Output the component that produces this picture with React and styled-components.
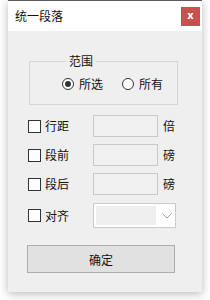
import styled, { createGlobalStyle } from 'styled-components';

const GlobalStyle = createGlobalStyle`
    html, body {
        margin: 0;
        padding: 0;
        background: #ffffff;
    }
    body {
        font-family: "Noto Sans CJK SC", "Noto Sans", sans-serif;
        font-size: 12px;
        color: #111;
    }
`;

const Page = styled.div`
    width: 210px;
    height: 300px;
    padding: 0 8px;
    box-sizing: border-box;
`;

const Window = styled.div`
    width: 194px;
    height: 292px;
    border-top: 1px solid #5c5c5c;
    box-sizing: border-box;
    display: flex;
    flex-direction: column;
    box-shadow: 0 2px 9px rgba(0, 0, 0, 0.28);
`;

const TitleBar = styled.div`
    height: 30px;
    flex: none;
    background: #ffffff;
    display: flex;
    align-items: center;
    justify-content: space-between;
    padding: 0 2px 0 7px;
`;

const Title = styled.span`
    font-size: 12px;
    line-height: 16px;
    color: #111;
`;

const CloseBtn = styled.div`
    width: 19px;
    height: 19px;
    background: #c9504f;
    color: #fff;
    font-family: "DejaVu Sans", sans-serif;
    font-weight: bold;
    font-size: 10px;
    line-height: 18px;
    text-align: center;
`;

const Body = styled.div`
    flex: 1;
    background: #efefef;
    padding: 22px 0 0 20px;
    display: flex;
    flex-direction: column;
`;

const GroupBox = styled.fieldset`
    margin: 0 0 0 1px;
    width: 149px;
    box-sizing: border-box;
    border: 1px solid #d6d6d6;
    padding: 7px 0 12px 32px;
    min-width: 0;
`;

const Legend = styled.legend`
    margin-left: 4px;
    padding: 0 3px;
    font-size: 12px;
    line-height: 16px;
`;

const RadioRow = styled.div`
    display: flex;
    align-items: center;
    height: 16px;
    gap: 19px;
`;

const RadioItem = styled.label`
    display: flex;
    align-items: center;
    gap: 5px;
    line-height: 16px;
`;

const RadioCircle = styled.span`
    width: 12px;
    height: 12px;
    border: 1px solid #333;
    border-radius: 50%;
    background: #fff;
    box-sizing: border-box;
    display: flex;
    align-items: center;
    justify-content: center;

    &::after {
        content: '';
        width: 6px;
        height: 6px;
        border-radius: 50%;
        background: ${({ checked }) => (checked ? '#333' : 'transparent')};
    }
`;

const Rows = styled.div`
    margin-top: 10px;
    display: flex;
    flex-direction: column;
    gap: 7px;
`;

const Row = styled.div`
    display: flex;
    align-items: center;
    height: ${({ tall }) => (tall ? '25px' : '22px')};
    margin-top: ${({ tall }) => (tall ? '1px' : '0')};
`;

const CheckLabel = styled.label`
    width: 65px;
    display: flex;
    align-items: center;
    gap: 4px;
    line-height: 16px;
`;

const CheckBox = styled.span`
    width: 13px;
    height: 13px;
    border: 1px solid #333;
    background: #fff;
    box-sizing: border-box;
`;

const TextBox = styled.div`
    width: 65px;
    height: 22px;
    box-sizing: border-box;
    border: 1px solid #c9c9c9;
    background: #f0f0f0;
`;

const Unit = styled.span`
    margin-left: 5px;
    line-height: 16px;
`;

const Select = styled.div`
    width: 83px;
    height: 25px;
    box-sizing: border-box;
    border: 1px solid #cacaca;
    background: #fff;
    display: flex;
    align-items: center;
    padding: 0 0 0 2px;
`;

const SelectField = styled.div`
    width: 60px;
    height: 19px;
    background: #efefef;
`;

const Chevron = styled.svg`
    margin-left: 6px;
`;

const OkButton = styled.button`
    margin: 17px 0 0 -1px;
    width: 148px;
    height: 28px;
    box-sizing: border-box;
    border: 1px solid #adadad;
    background: #e1e1e1;
    font-family: inherit;
    font-size: 12px;
    color: #111;
    padding: 0;
`;

const rows = [
    { label: '行距', unit: '倍' },
    { label: '段前', unit: '磅' },
    { label: '段后', unit: '磅' },
];

export default function App() {
    return (
        <Page>
            <GlobalStyle />
            <Window>
                <TitleBar>
                    <Title>统一段落</Title>
                    <CloseBtn>x</CloseBtn>
                </TitleBar>
                <Body>
                    <GroupBox>
                        <Legend>范围</Legend>
                        <RadioRow>
                            <RadioItem>
                                <RadioCircle checked />
                                所选
                            </RadioItem>
                            <RadioItem>
                                <RadioCircle />
                                所有
                            </RadioItem>
                        </RadioRow>
                    </GroupBox>

                    <Rows>
                        {rows.map((r) => (
                            <Row key={r.label}>
                                <CheckLabel>
                                    <CheckBox />
                                    {r.label}
                                </CheckLabel>
                                <TextBox />
                                <Unit>{r.unit}</Unit>
                            </Row>
                        ))}
                        <Row tall>
                            <CheckLabel>
                                <CheckBox />
                                对齐
                            </CheckLabel>
                            <Select>
                                <SelectField />
                                <Chevron width="10" height="6" viewBox="0 0 10 6">
                                    <path d="M0.5 0.5 L5 5 L9.5 0.5" fill="none" stroke="#a0a0a0" strokeWidth="1" />
                                </Chevron>
                            </Select>
                        </Row>
                    </Rows>

                    <OkButton>确定</OkButton>
                </Body>
            </Window>
        </Page>
    );
}
